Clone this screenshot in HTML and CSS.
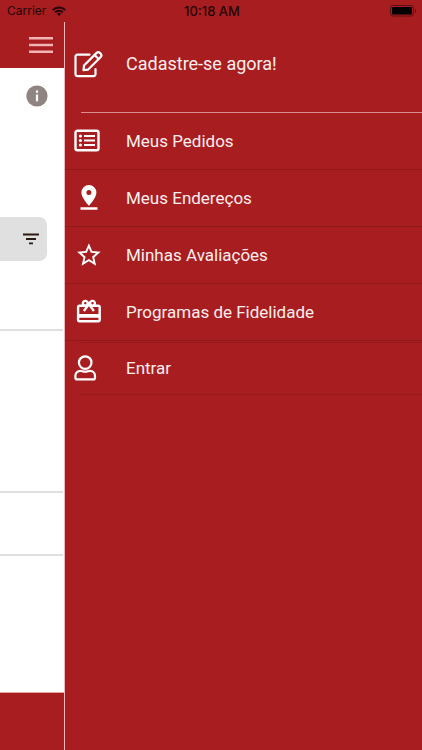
FILE: index.html
```html
<!DOCTYPE html>
<html lang="pt-BR">
<head>
<meta charset="utf-8">
<meta name="viewport" content="width=device-width, initial-scale=1">
<title>Menu</title>
<link rel="stylesheet" href="styles.css">
</head>
<body>
<div class="status">
  <div class="carrier">
    <span>Carrier</span>
    <svg width="14" height="10" viewBox="0 0 14 10" aria-hidden="true"><g fill="none" stroke="currentColor" stroke-width="2"><path d="M.8 4a8.8 8.8 0 0 1 12.400 0"/><path d="M3.100 6.400a5.500 5.500 0 0 1 7.800 0"/></g><path d="M7 10 4.900 7.800a3 3 0 0 1 4.200 0z" fill="currentColor"/></svg>
  </div>
  <time class="clock">10:18 AM</time>
  <svg class="battery" width="27" height="12" viewBox="0 0 27 12" aria-hidden="true"><rect x=".5" y=".5" width="23" height="10.500" rx="2.500" fill="none" stroke="#5c1012"/><rect x="2" y="2" width="20" height="7.500" rx="1" fill="#000"/><path d="M25 4v4c1.600-.8 1.600-3.200 0-4z" fill="#5c1012"/></svg>
</div>
<div class="shell">
  <main class="page">
    <header class="page-header">
      <button class="icon-button burger" type="button" aria-label="Menu"><svg width="24" height="18" viewBox="0 0 24 18"><path d="M0 2.200h24M0 9h24M0 15.800h24" stroke="currentColor" stroke-width="2.500"/></svg></button>
    </header>
    <section class="info">
      <button class="icon-button" type="button" aria-label="Informações"><svg width="22" height="22" viewBox="0 0 22 22"><circle cx="11" cy="11" r="10.600" fill="#8f8480"/><path d="M9.900 5.500h2.200v2.200H9.900zM9.900 9.600h2.200v6.600H9.900z" fill="#fff"/></svg></button>
    </section>
    <section class="search">
      <button class="filter" type="button" aria-label="Filtrar"><svg width="16" height="12" viewBox="0 0 16 12"><path d="M0 1.500h16M3 6h10M6 10.300h4" stroke="#2c1a12" stroke-width="1.800"/></svg></button>
    </section>
    <section class="block block-large"></section>
    <section class="block block-small"></section>
    <section class="rest"></section>
    <footer class="page-footer"></footer>
  </main>
  <nav class="drawer">
    <a class="item signup" href="#cadastro">
      <svg class="icon" viewBox="0 0 30 30"><g fill="none" stroke="currentColor" stroke-width="2.200" stroke-linejoin="round" stroke-linecap="round"><path d="M15.500 5.600H3.500a2 2 0 0 0-2 2v17.500a2 2 0 0 0 2 2h16a2 2 0 0 0 2-2V20"/><path d="M9.500 21.200l.5-4.700L22.600 3.900a2.300 2.300 0 0 1 3.200 0l.9.900a2.300 2.300 0 0 1 0 3.200L14.200 20.600z"/><path d="M20.600 6l4 4"/></g></svg>
      <span>Cadastre-se agora!</span>
    </a>
    <a class="item" href="#pedidos">
      <svg class="icon" viewBox="0 0 30 30"><rect x="1.500" y="4.800" width="23" height="19.500" rx="1.800" fill="none" stroke="currentColor" stroke-width="2.400"/><path d="M10 10h11M10 14.500h11M10 19h11" stroke="currentColor" stroke-width="2.200"/><g fill="currentColor"><circle cx="6.400" cy="10" r="1.600"/><circle cx="6.400" cy="14.500" r="1.600"/><circle cx="6.400" cy="19" r="1.600"/></g></svg>
      <span>Meus Pedidos</span>
    </a>
    <a class="item" href="#enderecos">
      <svg class="icon" viewBox="0 0 30 30"><path d="M14.900 2a7.500 7.500 0 0 0-7.500 7.500c0 5.500 7.500 13.300 7.500 13.300s7.500-7.800 7.500-13.300A7.500 7.500 0 0 0 14.900 2zm0 9.900a2.500 2.500 0 1 1 0-5 2.500 2.500 0 0 1 0 5zM6.500 24.300h17v2.400h-17z" fill="currentColor"/></svg>
      <span>Meus Endereços</span>
    </a>
    <a class="item" href="#avaliacoes">
      <svg class="icon" viewBox="0 0 30 30"><path transform="translate(.7 .9) scale(1.180)" d="M22 9.240l-7.190-.62L12 2 9.190 8.630 2 9.240l5.460 4.730L5.820 21 12 17.270 18.180 21l-1.630-7.030L22 9.240zM12 15.400l-3.760 2.270 1-4.280-3.320-2.880 4.380-.38L12 6.100l1.710 4.040 4.380.38-3.320 2.880 1 4.280L12 15.400z" fill="currentColor"/></svg>
      <span>Minhas Avaliações</span>
    </a>
    <a class="item" href="#fidelidade">
      <svg class="icon" viewBox="0 0 30 30"><path transform="translate(.5 .3) scale(1.200)" d="M20 6h-2.180c.11-.31.180-.65.180-1 0-1.660-1.340-3-3-3-1.050 0-1.960.54-2.500 1.350l-.5.670-.5-.68C10.960 2.540 10.050 2 9 2 7.340 2 6 3.340 6 5c0 .35.070.69.180 1H4c-1.110 0-1.990.89-1.990 2L2 19c0 1.110.89 2 2 2h16c1.110 0 2-.89 2-2V8c0-1.110-.89-2-2-2zm-5-2c.55 0 1 .45 1 1s-.45 1-1 1-1-.45-1-1 .45-1 1-1zM9 4c.55 0 1 .45 1 1s-.45 1-1 1-1-.45-1-1 .45-1 1-1zm11 15H4v-2h16v2zm0-5H4V8h5.080L7 10.830 8.620 12 11 8.760l1-1.360 1 1.360L15.380 12 17 10.830 14.920 8H20v6z" fill="currentColor"/></svg>
      <span>Programas de Fidelidade</span>
    </a>
    <a class="item login" href="#entrar">
      <svg class="icon" viewBox="0 0 30 30"><g fill="none" stroke="currentColor" stroke-width="2.200" stroke-linejoin="round"><circle cx="11.200" cy="9.600" r="6.300"/><path d="M6.300 17.800c1.800 0 2.600.9 4.900.9s3.100-.9 4.900-.9a4.900 4.900 0 0 1 4.900 4.900v2a1.700 1.700 0 0 1-1.700 1.700H3.100a1.700 1.700 0 0 1-1.700-1.700v-2a4.900 4.900 0 0 1 4.900-4.900z"/></g></svg>
      <span>Entrar</span>
    </a>
  </nav>
</div>
</body>
</html>
```
FILE: styles.css
```css
:root {
  --red: #a71d20;
  --line: #e0e0e0;
}

* {
  box-sizing: border-box;
}

body {
  margin: 0;
  min-height: 100vh;
  display: flex;
  flex-direction: column;
  background: var(--red);
  font-family: Roboto, sans-serif;
}

svg {
  display: block;
  flex: none;
}

.status {
  height: 22px;
  padding: 0 5px 0 7px;
  display: grid;
  grid-template-columns: 1fr auto 1fr;
  align-items: center;
  color: #240506;
  font: 12px/22px Inter, sans-serif;
}

.carrier {
  display: flex;
  align-items: center;
  gap: 6px;
}

.clock {
  font-size: 13px;
  font-weight: 500;
}

.battery {
  justify-self: end;
}

.shell {
  flex: 1;
  display: flex;
}

.page {
  flex: 0 0 64px;
  display: flex;
  flex-direction: column;
  background: #fff;
}

.page-header {
  height: 46px;
  padding-right: 11px;
  display: flex;
  align-items: center;
  justify-content: flex-end;
  background: var(--red);
}

.icon-button {
  padding: 0;
  border: 0;
  background: none;
}

.burger {
  color: #f3b4b6;
}

.info {
  height: 149px;
  padding: 17px 16px 0 0;
  display: flex;
  align-items: flex-start;
  justify-content: flex-end;
}

.search {
  height: 114px;
  padding-right: 17px;
  border-bottom: 2px solid var(--line);
}

.filter {
  width: 100%;
  height: 44px;
  padding: 0 8px 0 0;
  display: flex;
  align-items: center;
  justify-content: flex-end;
  border: 0;
  border-radius: 0 8px 8px 0;
  background: var(--line);
}

.search,
.block {
  margin-right: 1px;
}

.search {
  padding-right: 16px;
}

.block {
  border-bottom: 2px solid var(--line);
}

.block-large {
  height: 162px;
}

.block-small {
  height: 63px;
}

.rest {
  flex: 1;
}

.page-footer {
  height: 58px;
  border-top: 1px solid #e8a0a2;
  background: var(--red);
}

.drawer {
  flex: 1;
  border-left: 1px solid #f0b8ba;
  background: var(--red);
}

.item {
  height: 57px;
  padding-left: 9px;
  display: flex;
  align-items: center;
  gap: 22px;
  border-bottom: 1px solid #8f181b;
  color: #fdeeee;
  font-size: 17px;
  line-height: 24px;
  text-decoration: none;
}

.icon {
  width: 30px;
  height: 30px;
  color: #fff;
}

.signup,
.login {
  border: 0;
  background-position: 16px 100%, 16px 1px;
  background-size: 100% 1px;
  background-repeat: no-repeat;
}

.signup {
  height: 91px;
  padding-bottom: 8px;
  background-image: linear-gradient(#d98d8f, #d98d8f);
  font-size: 18px;
}

.login {
  height: 54px;
  background-image: linear-gradient(#98191c, #98191c), linear-gradient(#98191c, #98191c);
}
```
